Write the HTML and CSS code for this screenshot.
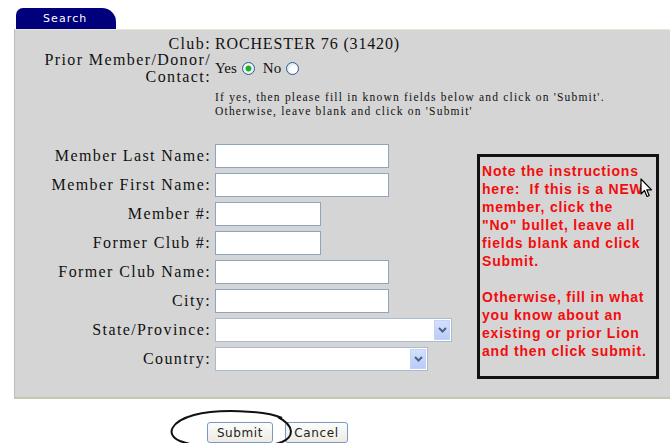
FILE: index.html
```html
<!DOCTYPE html>
<html lang="en">
<head>
<meta charset="utf-8">
<title>Member Search</title>
<link rel="stylesheet" href="styles.css">
</head>
<body>
<div class="page">
  <div class="tab">Search</div>
  <div class="panel">
    <form class="form">
      <div class="label club-label">Club:</div>
      <div class="club-value">ROCHESTER 76 (31420)</div>

      <div class="label prior-label">Prior Member/Donor/<br>Contact:</div>
      <div class="choice">
        <span>Yes</span><input class="radio" type="radio" name="prior" checked>
        <span class="no">No</span><input class="radio" type="radio" name="prior">
      </div>

      <div class="hint">If yes, then please fill in known fields below and click on 'Submit'.<br>Otherwise, leave blank and click on 'Submit'</div>

      <label class="label">Member Last Name:</label>
      <div class="field"><input class="text long" type="text"></div>

      <label class="label">Member First Name:</label>
      <div class="field"><input class="text long" type="text"></div>

      <label class="label">Member #:</label>
      <div class="field"><input class="text short" type="text"></div>

      <label class="label">Former Club #:</label>
      <div class="field"><input class="text short" type="text"></div>

      <label class="label">Former Club Name:</label>
      <div class="field"><input class="text long" type="text"></div>

      <label class="label">City:</label>
      <div class="field"><input class="text long" type="text"></div>

      <label class="label">State/Province:</label>
      <div class="field">
        <div class="select state"><span class="select-value"></span><span class="drop"><svg width="9" height="6" viewBox="0 0 9 6"><path d="M1 1 L4.5 4.5 L8 1" fill="none" stroke="#4d6185" stroke-width="2"/></svg></span></div>
      </div>

      <label class="label">Country:</label>
      <div class="field">
        <div class="select country"><span class="select-value"></span><span class="drop"><svg width="9" height="6" viewBox="0 0 9 6"><path d="M1 1 L4.5 4.5 L8 1" fill="none" stroke="#4d6185" stroke-width="2"/></svg></span></div>
      </div>

      <div class="note">
        <p>Note the instructions<br>here:&nbsp; If this is a NEW<br>member, click the<br>"No" bullet, leave all<br>fields blank and click<br>Submit.</p>
        <p>Otherwise, fill in what<br>you know about an<br>existing or prior Lion<br>and then click submit.</p>
        <svg class="pointer" width="13" height="20" viewBox="0 0 13 20"><path d="M1 1 L1 16 L4.5 12.5 L7 18.5 L9.2 17.5 L6.8 11.8 L11.5 11.8 Z" fill="#fff" stroke="#000" stroke-width="1.2" stroke-linejoin="round"/></svg>
      </div>
    </form>
  </div>
  <div class="actions">
    <button class="btn submit" type="button">Submit</button>
    <button class="btn cancel" type="button">Cancel</button>
    <svg class="circled" width="142" height="40" viewBox="0 0 142 40"><path d="M118 8 C100 0 52 -1 30 5 C8 11 0 24 16 31 C38 40 100 39 118 32 C130 27 131 16 114 7" fill="none" stroke="#111" stroke-width="2"/></svg>
  </div>
</div>
</body>
</html>
```

FILE: styles.css
```css
html, body {
  margin: 0;
  background: #fff;
}

.page {
  padding: 8px 0 0 14px;
  font-family: "Liberation Serif", "Times New Roman", serif;
  color: #111;
}

/* navy folder tab above the panel */
.tab {
  margin-left: 2px;
  width: 100px;
  height: 21px;
  box-sizing: border-box;
  padding-left: 27px;
  background: #00007c;
  border-radius: 7px 14px 0 0;
  color: #fff;
  font: 11px/21px "DejaVu Sans", Verdana, sans-serif;
  letter-spacing: 1.1px;
}

.panel {
  background: #d5d5d5;
  border-top: 1px solid #e9e6d6;
  border-left: 1px solid #bcbcbc;
  border-bottom: 2px solid #c9c6b2;
  padding: 7px 0 24px;
}

.form {
  display: grid;
  grid-template-columns: 196px 257px 183px;
  grid-template-rows: auto auto auto repeat(8, 29px);
  column-gap: 4px;
  margin: 0;
}

.label {
  grid-column: 1;
  text-align: right;
  font-size: 16px;
  letter-spacing: 1.4px;
  white-space: nowrap;
  align-self: center;
  line-height: 17px;
}

.club-label,
.club-value {
  line-height: 14px;
}

.club-value {
  grid-column: 2 / 4;
  font-size: 16px;
  letter-spacing: 0.85px;
}

.prior-label {
  line-height: 17px;
}

.choice {
  grid-column: 2 / 4;
  display: flex;
  align-items: center;
  font-size: 15px;
  letter-spacing: 0;
}

.choice .no {
  margin-left: 8px;
}

.radio {
  appearance: none;
  -webkit-appearance: none;
  width: 13px;
  height: 13px;
  margin: 0 0 0 5px;
  border: 1px solid #2c5f93;
  border-radius: 50%;
  background: radial-gradient(circle at 60% 60%, #fff 0 3px, #dfe8f3 6px);
}

.radio:checked {
  background: radial-gradient(circle, #1fae2c 0 2.6px, #f4f8f4 3.4px, #dfe8f3 6px);
}

.hint {
  grid-column: 2 / 4;
  margin: 5px 0 23px;
  font-size: 11.5px;
  line-height: 14px;
  letter-spacing: 1.2px;
  white-space: nowrap;
}

.field {
  grid-column: 2;
  display: flex;
  align-items: center;
}

.text {
  height: 24px;
  box-sizing: border-box;
  margin: 0;
  border: 1px solid #8ea5bf;
  background: #fff;
}

.long { width: 174px; }
.short { width: 106px; }

.select {
  display: flex;
  height: 24px;
  box-sizing: border-box;
  border: 1px solid #a9bbd0;
  background: #fff;
  padding: 1px;
}

.state { width: 237px; }
.country { width: 213px; }

.select-value { flex: 1; }

.drop {
  width: 16px;
  display: flex;
  align-items: center;
  justify-content: center;
  background: linear-gradient(#d3e0fd, #b9ccf8);
  border: 1px solid #c3d3f7;
  box-sizing: border-box;
}

/* red reminder box on the right of the fields */
.note {
  grid-column: 3;
  grid-row: 4 / 12;
  align-self: start;
  position: relative;
  margin: 13px 0 0 1px;
  height: 225px;
  box-sizing: border-box;
  border: 3px solid #111;
  padding: 5px 0 0 2px;
  color: #f20d0d;
  font: bold 14px/18px "Liberation Sans", Arial, sans-serif;
  letter-spacing: 0.8px;
  white-space: nowrap;
}

.note p {
  margin: 0 0 18px;
}

.pointer {
  position: absolute;
  left: 160px;
  top: 21px;
}

.actions {
  position: relative;
  display: flex;
  gap: 12px;
  margin-top: 23px;
  padding-left: 193px;
}

.btn {
  height: 21px;
  box-sizing: border-box;
  padding: 0;
  border: 1px solid #7c98c4;
  border-radius: 3px;
  background: linear-gradient(#fdfdfb, #ecebe3);
  font: 12px "DejaVu Sans", Tahoma, sans-serif;
  letter-spacing: 0.6px;
  color: #222;
}

.submit { width: 66px; }
.cancel { width: 63px; }

.circled {
  position: absolute;
  left: 150px;
  top: -12px;
}
```
